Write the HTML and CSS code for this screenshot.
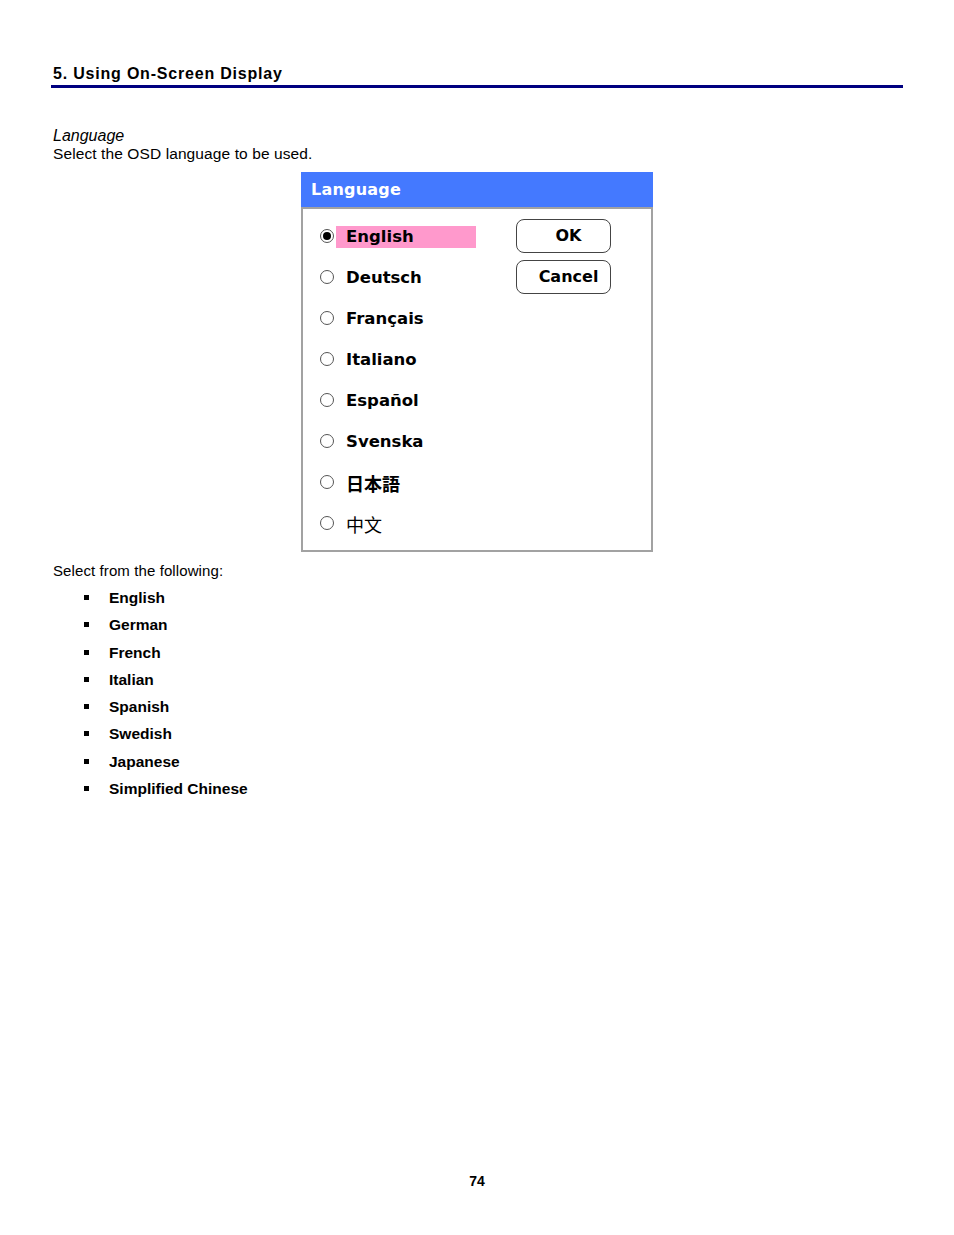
FILE: index.html
```html
<!DOCTYPE html>
<html>
<head>
<meta charset="utf-8">
<link rel="stylesheet" href="styles.css">
</head>
<body>
<div class="page">
  <div class="header"><h1 class="title">5. Using On-Screen Display</h1></div>
  <div class="section">
    <div class="sub">Language</div>
    <div class="desc">Select the OSD language to be used.</div>
  </div>
  <div class="dialog">
    <div class="dlg-title">Language</div>
    <div class="dlg-body">
      <div class="items">
        <div class="item"><span class="radio on"></span><span class="label sel">English</span></div>
        <div class="item"><span class="radio"></span><span class="label">Deutsch</span></div>
        <div class="item"><span class="radio"></span><span class="label">Français</span></div>
        <div class="item"><span class="radio"></span><span class="label">Italiano</span></div>
        <div class="item"><span class="radio"></span><span class="label">Español</span></div>
        <div class="item"><span class="radio"></span><span class="label">Svenska</span></div>
        <div class="item"><span class="radio"></span><span class="label cjk">日本語</span></div>
        <div class="item"><span class="radio"></span><span class="label cjk thin">中文</span></div>
      </div>
      <div class="buttons">
        <div class="btn">OK</div>
        <div class="btn">Cancel</div>
      </div>
    </div>
  </div>
  <div class="follow">Select from the following:</div>
  <ul class="list">
    <li>English</li>
    <li>German</li>
    <li>French</li>
    <li>Italian</li>
    <li>Spanish</li>
    <li>Swedish</li>
    <li>Japanese</li>
    <li>Simplified Chinese</li>
  </ul>
  <div class="pagenum">74</div>
</div>
</body>
</html>
```
FILE: styles.css
```css
html, body {
  margin: 0;
  padding: 0;
  background: #ffffff;
}
.page {
  width: 954px;
  height: 1235px;
  box-sizing: border-box;
  padding: 0 51px;
  font-family: "Liberation Sans", Arial, sans-serif;
  color: #000;
  position: relative;
}
.header {
  padding-top: 63px;
  border-bottom: 3px solid #000080;
}
.title {
  margin: 0 0 0 2px;
  padding-bottom: 1px;
  font-size: 16px;
  line-height: 21px;
  font-weight: 900;
  letter-spacing: 0.8px;
}
.section {
  margin-top: 39px;
  padding-left: 2px;
}
.sub {
  font-style: italic;
  font-size: 16px;
  line-height: 18px;
}
.desc {
  font-size: 15.5px;
  letter-spacing: 0.1px;
  line-height: 17px;
}
.dialog {
  margin-top: 10px;
  margin-left: 250px;
  width: 352px;
}
.dlg-title {
  height: 35px;
  background: #4479ff;
  color: #ffffff;
  font-family: "DejaVu Sans", sans-serif;
  font-weight: bold;
  font-size: 16px;
  letter-spacing: 0.2px;
  line-height: 35px;
  padding-left: 10px;
}
.dlg-body {
  border: 2px solid #a2a2a2;
  height: 345px;
  box-sizing: border-box;
  padding: 7px 0 0 16px;
  display: flex;
}
.items {
  width: 180px;
}
.item {
  height: 41px;
  display: flex;
  align-items: center;
}
.radio {
  width: 12px;
  height: 12px;
  border: 1.5px solid #555;
  border-radius: 50%;
  box-sizing: content-box;
  display: flex;
  align-items: center;
  justify-content: center;
  flex: none;
  margin-top: -2px;
  margin-left: 1px;
}
.radio.on::after {
  content: "";
  width: 8px;
  height: 8px;
  border-radius: 50%;
  background: #000;
}
.label {
  margin-left: 2px;
  padding-left: 10px;
  height: 22px;
  line-height: 22px;
  font-family: "DejaVu Sans", sans-serif;
  font-weight: bold;
  font-size: 16.5px;
  letter-spacing: 0;
  color: #000;
}
.label.sel {
  background: #ff99cc;
  width: 130px;
}
.label.cjk {
  font-family: "Noto Sans CJK JP", sans-serif;
  font-weight: bold;
  font-size: 18px;
}
.label.thin {
  font-family: "Noto Sans CJK SC", sans-serif;
  font-weight: normal;
}
.buttons {
  margin-left: 17px;
  padding-top: 3px;
  display: flex;
  flex-direction: column;
  gap: 7px;
}
.btn {
  width: 95px;
  height: 34px;
  box-sizing: border-box;
  border: 1.5px solid #444;
  border-radius: 8px;
  padding-left: 10px;
  text-align: center;
  line-height: 31px;
  font-family: "DejaVu Sans", sans-serif;
  font-weight: bold;
  font-size: 16px;
}
.follow {
  margin-top: 10px;
  padding-left: 2px;
  font-size: 15px;
  letter-spacing: 0.1px;
  line-height: 17px;
}
.list {
  list-style: none;
  margin: 5px 0 0 0;
  padding: 0 0 0 58px;
}
.list li {
  font-size: 15.5px;
  font-weight: bold;
  line-height: 27.3px;
  position: relative;
}
.list li::before {
  content: "";
  position: absolute;
  left: -25px;
  top: 11px;
  width: 5px;
  height: 5px;
  background: #000;
}
.pagenum {
  position: absolute;
  left: 0;
  right: 0;
  top: 1173px;
  text-align: center;
  font-size: 14px;
  font-weight: bold;
}
```
